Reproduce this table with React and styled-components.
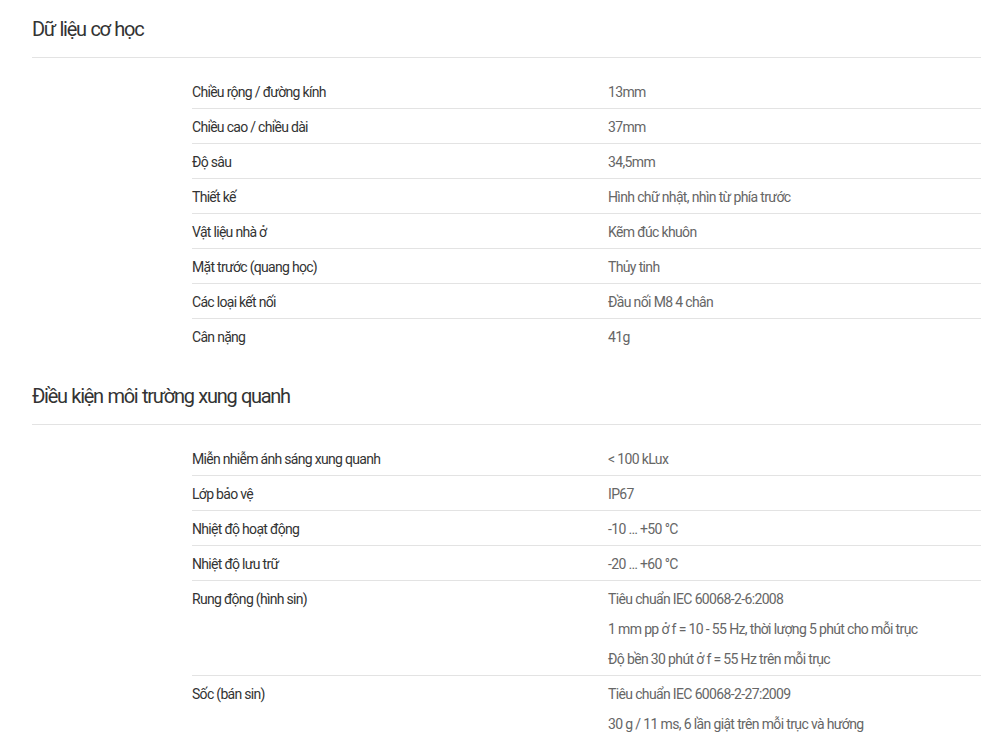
import React from 'react';
import styled, { createGlobalStyle } from 'styled-components';

const GlobalStyle = createGlobalStyle`
  * {
    margin: 0;
    padding: 0;
    box-sizing: border-box;
  }
  body {
    margin: 0;
    background: #fff;
    font-family: Roboto, "Liberation Sans", sans-serif;
  }
`;

const Page = styled.div`
  padding: 0 0 0 32px;
`;

const Section = styled.section`
  display: flex;
  flex-direction: column;
`;

const Heading = styled.h2`
  font-size: 20px;
  font-weight: 400;
  color: #333;
  line-height: 28px;
  letter-spacing: -0.065em;
  word-spacing: 1px;
  padding: ${(p) => (p.$first ? '15px' : '29px')} 0 14px;
  border-bottom: 1px solid #e3e3e3;
`;

const Table = styled.div`
  display: flex;
  flex-direction: column;
  margin: 16px 0 0 160px;
`;

const Row = styled.div`
  display: grid;
  grid-template-columns: 416px 1fr;
  padding: 8px 0 6px;
  border-bottom: 1px solid #e3e3e3;
  &:last-child {
    border-bottom: none;
  }
`;

const Label = styled.div`
  font-size: 14px;
  line-height: 20px;
  letter-spacing: -0.05em;
  color: #333;
`;

const Values = styled.div`
  display: flex;
  flex-direction: column;
  gap: 10px;
  font-size: 14px;
  line-height: 20px;
  letter-spacing: -0.046em;
  color: #666;
`;

const sections = [
  {
    title: 'Dữ liệu cơ học',
    rows: [
      ['Chiều rộng / đường kính', ['13mm']],
      ['Chiều cao / chiều dài', ['37mm']],
      ['Độ sâu', ['34,5mm']],
      ['Thiết kế', ['Hình chữ nhật, nhìn từ phía trước']],
      ['Vật liệu nhà ở', ['Kẽm đúc khuôn']],
      ['Mặt trước (quang học)', ['Thủy tinh']],
      ['Các loại kết nối', ['Đầu nối M8 4 chân']],
      ['Cân nặng', ['41g']],
    ],
  },
  {
    title: 'Điều kiện môi trường xung quanh',
    rows: [
      ['Miễn nhiễm ánh sáng xung quanh', ['< 100 kLux']],
      ['Lớp bảo vệ', ['IP67']],
      ['Nhiệt độ hoạt động', ['-10 … +50 °C']],
      ['Nhiệt độ lưu trữ', ['-20 … +60 °C']],
      [
        'Rung động (hình sin)',
        [
          'Tiêu chuẩn IEC 60068-2-6:2008',
          '1 mm pp ở f = 10 - 55 Hz, thời lượng 5 phút cho mỗi trục',
          'Độ bền 30 phút ở f = 55 Hz trên mỗi trục',
        ],
      ],
      [
        'Sốc (bán sin)',
        ['Tiêu chuẩn IEC 60068-2-27:2009', '30 g / 11 ms, 6 lần giật trên mỗi trục và hướng'],
      ],
    ],
  },
];

const App = () => {
  return (
    <Page>
      <GlobalStyle />
      {sections.map((s, i) => (
        <Section key={s.title}>
          <Heading $first={i === 0}>{s.title}</Heading>
          <Table>
            {s.rows.map(([label, values]) => (
              <Row key={label}>
                <Label>{label}</Label>
                <Values>
                  {values.map((v) => (
                    <span key={v}>{v}</span>
                  ))}
                </Values>
              </Row>
            ))}
          </Table>
        </Section>
      ))}
    </Page>
  );
};

export default App;
